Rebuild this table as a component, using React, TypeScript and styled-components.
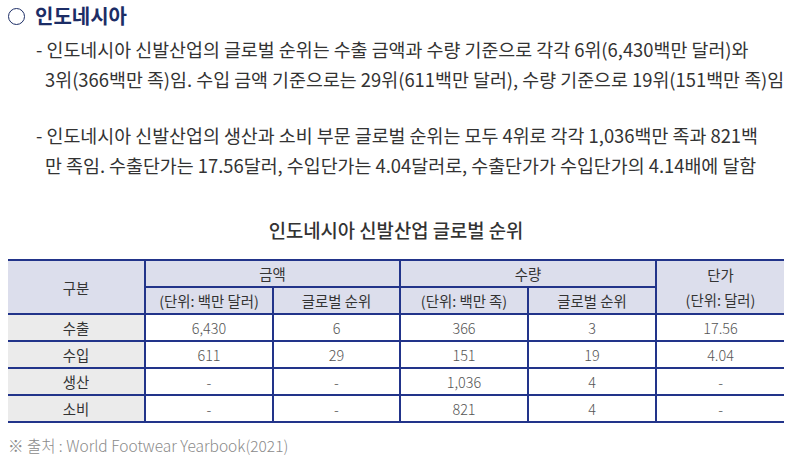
import React from 'react';
import styled, { createGlobalStyle } from 'styled-components';

const Global = createGlobalStyle`
  html, body { margin: 0; padding: 0; background: #ffffff; }
  body { font-family: "Noto Sans CJK KR", "Noto Sans", sans-serif; color: #333333; }
`;

const Page = styled.div`
  width: 792px;
  box-sizing: border-box;
  padding: 4px 8px 0 8px;
`;

const Title = styled.h2`
  margin: 0;
  display: flex;
  align-items: center;
  gap: 10px;
  height: 24px;
  font-size: 20px;
  line-height: 24px;
  font-weight: 700;
  color: #1c2d66;
`;

const Ring = styled.span`
  display: block;
  width: 17px;
  height: 17px;
  box-sizing: border-box;
  border: 1.5px solid #1c2d66;
  border-radius: 50%;
`;

const Bullets = styled.div`
  margin-top: 6px;
  display: flex;
  flex-direction: column;
  gap: 26px;
`;

const Bullet = styled.p`
  margin: 0;
  padding-left: 37px;
  text-indent: -9px;
  font-size: 18.4px;
  line-height: 30px;
  color: #333333;
  white-space: nowrap;
`;

const Caption = styled.div`
  margin-top: 38px;
  margin-bottom: 17px;
  text-align: center;
  font-size: 18.8px;
  line-height: 24px;
  font-weight: 500;
  color: #333333;
`;

const Table = styled.table`
  width: 776px;
  border-collapse: collapse;
  table-layout: fixed;
  border-top: 2px solid #22348a;
  border-bottom: 2px solid #22348a;
  font-size: 14.4px;
`;

const Cell = styled.td<{ $edge?: boolean }>`
  height: 25px;
  padding: 0;
  text-align: center;
  vertical-align: middle;
  line-height: 25px;
  border-top: 2px solid #22348a;
  border-left: ${(p) => (p.$edge ? 'none' : '2px solid #22348a')};
`;

const HeadCell = styled(Cell).attrs({ as: 'th' })`
  background: #dcdeec;
  color: #333333;
  font-weight: 400;
`;

const LabelCell = styled(Cell).attrs({ as: 'th' })`
  background: #ebebeb;
  color: #333333;
  font-weight: 400;
`;

const DataCell = styled(Cell)`
  color: #555555;
  font-weight: 300;
`;

const Footnote = styled.div`
  margin-top: 12px;
  font-size: 15.5px;
  line-height: 20px;
  color: #8a8a8a;
  font-weight: 300;
`;

const rows = [
  ['수출', '6,430', '6', '366', '3', '17.56'],
  ['수입', '611', '29', '151', '19', '4.04'],
  ['생산', '-', '-', '1,036', '4', '-'],
  ['소비', '-', '-', '821', '4', '-'],
];

export default function App() {
  return (
    <Page>
      <Global />
      <Title>
        <Ring />
        인도네시아
      </Title>
      <Bullets>
        <Bullet>
          - 인도네시아 신발산업의 글로벌 순위는 수출 금액과 수량 기준으로 각각 6위(6,430백만 달러)와
          <br />
          3위(366백만 족)임. 수입 금액 기준으로는 29위(611백만 달러), 수량 기준으로 19위(151백만 족)임
        </Bullet>
        <Bullet>
          - 인도네시아 신발산업의 생산과 소비 부문 글로벌 순위는 모두 4위로 각각 1,036백만 족과 821백
          <br />
          만 족임. 수출단가는 17.56달러, 수입단가는 4.04달러로, 수출단가가 수입단가의 4.14배에 달함
        </Bullet>
      </Bullets>
      <Caption>인도네시아 신발산업 글로벌 순위</Caption>
      <Table>
        <colgroup>
          <col style={{ width: 137 }} />
          <col style={{ width: 128 }} />
          <col style={{ width: 127 }} />
          <col style={{ width: 128 }} />
          <col style={{ width: 128 }} />
          <col style={{ width: 128 }} />
        </colgroup>
        <thead>
          <tr>
            <HeadCell $edge rowSpan={2}>구분</HeadCell>
            <HeadCell colSpan={2}>금액</HeadCell>
            <HeadCell colSpan={2}>수량</HeadCell>
            <HeadCell rowSpan={2}>
              단가
              <br />
              (단위: 달러)
            </HeadCell>
          </tr>
          <tr>
            <HeadCell>(단위: 백만 달러)</HeadCell>
            <HeadCell>글로벌 순위</HeadCell>
            <HeadCell>(단위: 백만 족)</HeadCell>
            <HeadCell>글로벌 순위</HeadCell>
          </tr>
        </thead>
        <tbody>
          {rows.map((r) => (
            <tr key={r[0]}>
              <LabelCell $edge>{r[0]}</LabelCell>
              {r.slice(1).map((v, i) => (
                <DataCell key={i}>{v}</DataCell>
              ))}
            </tr>
          ))}
        </tbody>
      </Table>
      <Footnote>※ 출처 : World Footwear Yearbook(2021)</Footnote>
    </Page>
  );
}
